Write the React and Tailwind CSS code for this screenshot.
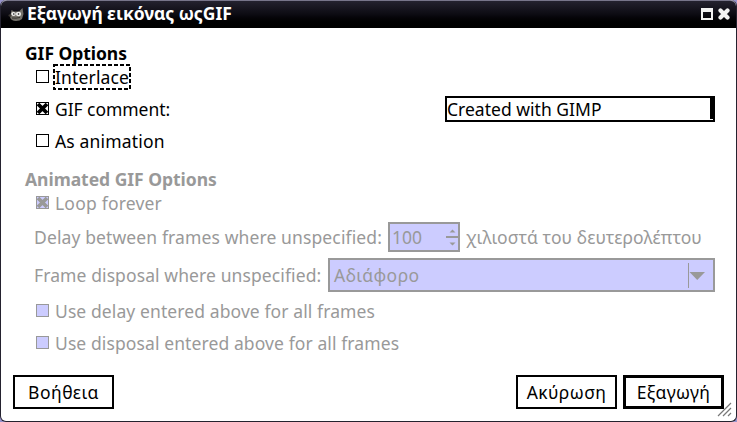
function Box({ checked, disabled }) {
  return (
    <svg
      className={"mr-1.5 mb-[2px] shrink-0 " + (disabled ? "text-[#999999]" : "text-black")}
      width="13"
      height="13"
      viewBox="0 0 13 13"
      stroke="currentColor"
    >
      <rect x="0.5" y="0.5" width="12" height="12" fill={disabled ? "#ccccff" : "#ffffff"} />
      {checked && <path d="M2 2L11 11M11 2L2 11" strokeWidth="3.8" fill="none" />}
    </svg>
  );
}

function Mascot() {
  return (
    <svg className="ml-[7px] mt-px shrink-0" width="16" height="14" viewBox="0 0 16 14">
      <path d="M3 5L3.500 2L6 3.500H11L14.500 0L15.500 6L14 11Q12 13 8 13Q3 13 2 9Z" fill="#74716a" />
      <ellipse cx="5.500" cy="6" rx="2.300" ry="2" fill="#eeeeec" />
      <ellipse cx="10.500" cy="6" rx="2.600" ry="2.200" fill="#eeeeec" />
      <circle cx="5.800" cy="6" r="0.800" fill="#111" />
      <circle cx="10.500" cy="6" r="0.800" fill="#111" />
      <ellipse cx="2" cy="7.500" rx="1.500" ry="1.200" fill="#3a3733" />
      <path d="M4 10Q8 10.500 12 9.500" stroke="#33312d" fill="none" />
    </svg>
  );
}

function TitleBar() {
  return (
    <header className="flex h-7 items-center rounded-t-[6px] border-t border-[#77758a] bg-linear-to-b from-[#24222f] via-[#0c0b12] to-black text-white">
      <Mascot />
      <h1 className="ml-[3px] pb-[3px] font-bold tracking-[-0.03px]">Εξαγωγή εικόνας ωςGIF</h1>
      <svg className="mr-[5px] mb-px ml-auto" width="30" height="13" viewBox="0 0 30 13">
        <path d="M0 0H12V12H0ZM2 4V10H10V4Z" fill="#f2f2f2" fillRule="evenodd" />
        <path d="M19.500 2.500L26.500 9.500M26.500 2.500L19.500 9.500" stroke="#f2f2f2" strokeWidth="4.200" strokeLinecap="round" />
      </svg>
    </header>
  );
}

export default function App() {
  return (
    <div className="h-[422px] w-[737px] overflow-hidden bg-[#9894cc] font-['Noto_Sans','Liberation_Sans',sans-serif] text-[17.5px] leading-[22px] whitespace-nowrap text-black">
      <div className="flex h-full flex-col rounded-[6px] border border-t-0 border-[#24222f] bg-white">
        <TitleBar />
        <main className="flex flex-col pt-[14px] pr-[21px] pl-6">
          <h2 className="h-[22px] font-bold tracking-[-0.05px]">GIF Options</h2>
          <label className="flex h-[26px] items-center pl-[11px]">
            <Box />
            <span className="relative tracking-[0.15px]">
              Interlace
              <svg className="absolute -top-[2px] -left-[2px]" width="78" height="26" viewBox="0 0 78 26">
                <rect x="1" y="1" width="76" height="24" fill="none" stroke="black" strokeWidth="2" strokeDasharray="4 2" />
              </svg>
            </span>
          </label>
          <div className="mt-[5px] flex h-[28px] items-center justify-between pl-[11px]">
            <label className="flex items-center">
              <Box checked />
              <span className="tracking-[-0.05px]">GIF comment:</span>
            </label>
            <div className="flex h-[26px] w-[270px] justify-between border-2 border-black pb-px">
              <span className="tracking-[0.02px]">Created with GIMP</span>
              <i className="h-[21px] w-[3px] bg-black" />
            </div>
          </div>
          <label className="mt-[6px] flex h-[24px] items-center pl-[11px] tracking-[0.17px]">
            <Box />
            As animation
          </label>
          <section className="mt-[15px] text-[#999999]">
            <h2 className="h-[22px] font-bold tracking-[-0.03px]">Animated GIF Options</h2>
            <label className="mt-px flex h-6 items-center pl-[11px] tracking-[0.2px]">
              <Box checked disabled />
              Loop forever
            </label>
            <div className="mt-[7px] flex h-[30px] items-center pl-[9px]">
              <span className="w-[354px] tracking-[0.12px]">Delay between frames where unspecified:</span>
              <div className="flex h-[30px] w-[72px] items-center justify-between border-2 border-[#999999] bg-[#ccccff] pl-[2px]">
                <span>100</span>
                <svg width="12" height="26" viewBox="0 0 12 26" fill="#999999">
                  <path d="M0 12H12V14H0ZM3.500 8.500L6.500 5.500L9.500 8.500ZM3.500 18.500L6.500 21.500L9.500 18.500Z" />
                </svg>
              </div>
              <span className="ml-[6px] tracking-[0.09px]">χιλιοστά του δευτερολέπτου</span>
            </div>
            <div className="mt-[6px] flex h-[34px] items-center pl-[9px]">
              <span className="w-[294px] tracking-[0.1px]">Frame disposal where unspecified:</span>
              <div className="flex h-[34px] grow items-center justify-between border-2 border-[#999999] bg-[#ccccff] pl-[4px]">
                <span className="tracking-[0.45px]">Αδιάφορο</span>
                <svg width="25" height="26" viewBox="0 0 25 26" fill="#999999">
                  <path d="M0 1H1V26H0ZM1.500 10H17L9.250 18Z" />
                </svg>
              </div>
            </div>
            <label className="mt-[7px] flex h-6 items-center pl-[11px] tracking-[0.1px]">
              <Box disabled />
              Use delay entered above for all frames
            </label>
            <label className="mt-2 flex h-6 items-center pl-[11px] tracking-[0.1px]">
              <Box disabled />
              Use disposal entered above for all frames
            </label>
          </section>
        </main>
        <footer className="relative mt-auto mb-3 flex h-[34px] pr-3 pl-3">
          <button className="w-[101px] border-2 border-black tracking-[0.5px]">Βοήθεια</button>
          <button className="mr-[6px] ml-auto w-[101px] border-2 border-black tracking-[0.4px]">Ακύρωση</button>
          <button className="w-[101px] border-[3px] border-black tracking-[0.35px]">Εξαγωγή</button>
          <svg className="absolute right-[4px] -bottom-[8px]" width="15" height="15" viewBox="0 0 15 15" stroke="#777777" strokeWidth="1.2">
            <path d="M1 14L14 1M6 14L14 6M11 14L14 11" />
          </svg>
        </footer>
      </div>
    </div>
  );
}
